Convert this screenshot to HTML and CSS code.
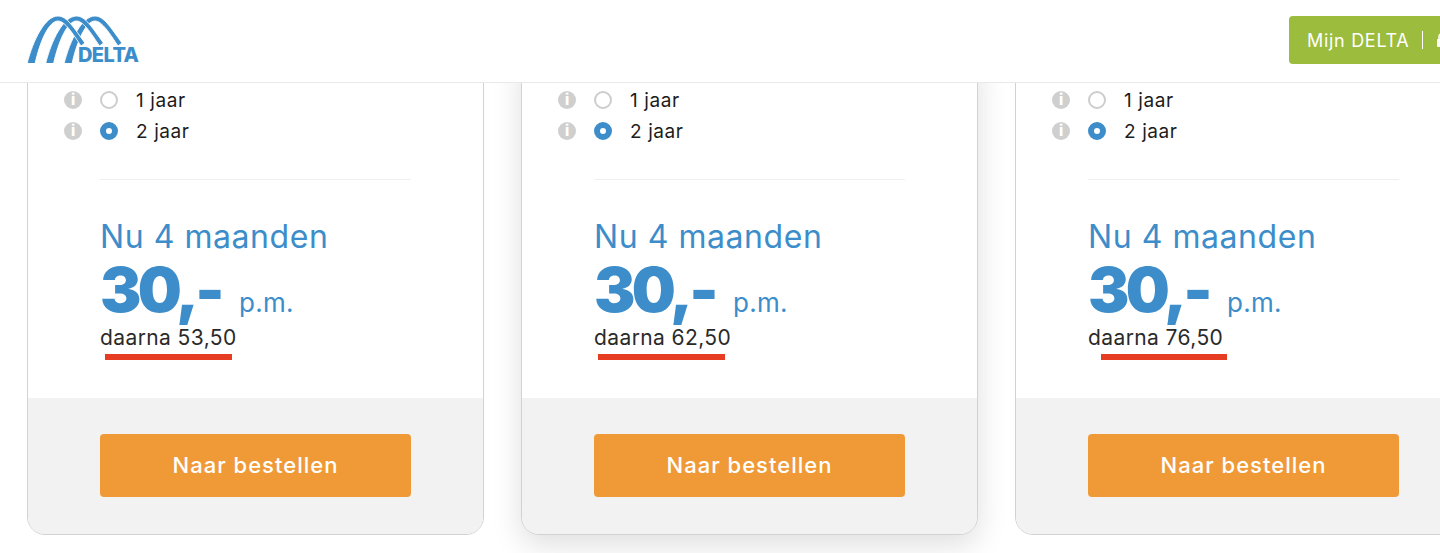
FILE: index.html
```html
<!DOCTYPE html>
<html lang="nl">
<head>
<meta charset="utf-8">
<title>DELTA</title>
<link rel="stylesheet" href="styles.css">
</head>
<body>
<header class="top">
  <a class="logo">
    <svg class="arcs" viewBox="0 0 112 49" width="112" height="49" aria-hidden="true">
      <g fill="#3c8dca" stroke="#fff" stroke-width=".9">
        <path d="M37 50C43 26 55 2 68 2C77 2 84 14 95 29L91 32C83 20 75 7 68 7C59 7 50 27 45 50Z"/>
        <path d="M18.500 50C24.500 26 36.500 2 49.500 2C58.500 2 65.500 14 76.500 29L72.500 32C64.500 20 56.500 7 49.500 7C40.500 7 31.500 27 26.500 50Z"/>
        <path d="M0 50C6 26 18 2 31 2C40 2 47 14 58 29L54 32C46 20 38 7 31 7C22 7 13 27 8 50Z"/>
      </g>
    </svg>
    <span class="logo-word">DELTA</span>
  </a>
  <a class="account"><span class="account-label">Mijn DELTA</span><span class="sep"></span>
    <svg class="lock" viewBox="0 0 12 14" width="12" height="14" aria-hidden="true"><path d="M3 6V4a3 3 0 0 1 6 0v2" fill="none" stroke="#fff" stroke-width="1.6"/><rect x="1" y="6" width="10" height="8" rx="1" fill="#fff"/></svg>
  </a>
</header>
<main class="cards">
  <article class="card">
    <div class="body">
      <div class="opts">
        <div class="opt"><span class="info">i</span><span class="radio"></span><span class="opt-label">1 jaar</span></div>
        <div class="opt"><span class="info">i</span><span class="radio on"></span><span class="opt-label">2 jaar</span></div>
      </div>
      <hr class="rule">
      <p class="promo">Nu 4 maanden</p>
      <p class="price"><strong>30,-</strong><span class="pm">p.m.</span></p>
      <p class="after">daarna 53,50</p>
    </div>
    <div class="foot"><a class="cta">Naar bestellen</a></div>
    <span class="mark"></span>
  </article>
  <article class="card raised">
    <div class="body">
      <div class="opts">
        <div class="opt"><span class="info">i</span><span class="radio"></span><span class="opt-label">1 jaar</span></div>
        <div class="opt"><span class="info">i</span><span class="radio on"></span><span class="opt-label">2 jaar</span></div>
      </div>
      <hr class="rule">
      <p class="promo">Nu 4 maanden</p>
      <p class="price"><strong>30,-</strong><span class="pm">p.m.</span></p>
      <p class="after">daarna 62,50</p>
    </div>
    <div class="foot"><a class="cta">Naar bestellen</a></div>
    <span class="mark mark-mid"></span>
  </article>
  <article class="card">
    <div class="body">
      <div class="opts">
        <div class="opt"><span class="info">i</span><span class="radio"></span><span class="opt-label">1 jaar</span></div>
        <div class="opt"><span class="info">i</span><span class="radio on"></span><span class="opt-label">2 jaar</span></div>
      </div>
      <hr class="rule">
      <p class="promo">Nu 4 maanden</p>
      <p class="price"><strong>30,-</strong><span class="pm">p.m.</span></p>
      <p class="after">daarna 76,50</p>
    </div>
    <div class="foot"><a class="cta">Naar bestellen</a></div>
    <span class="mark mark-last"></span>
  </article>
</main>
</body>
</html>
```
FILE: styles.css
```css
* { box-sizing: border-box; }
html, body { margin: 0; height: 553px; overflow: hidden; background: #fff; }
body { font-family: "Inter", "Noto Sans", sans-serif; color: #222; position: relative; }
.top {
  position: relative; z-index: 2; height: 83px; background: #fff;
  border-bottom: 1px solid #e9e9e9;
  display: flex; justify-content: space-between; align-items: flex-start;
  padding: 14px 0 0 27px; overflow: hidden;
}
.logo { position: relative; display: block; width: 112px; height: 50px; }
.arcs { display: block; }
.logo-word {
  position: absolute; left: 50px; bottom: 0;
  font: 800 20px/18px "Inter", sans-serif; color: #3c8dca; letter-spacing: -.6px;
  background: #fff; padding-left: 1px;
}
.account {
  display: flex; align-items: center; flex: none;
  height: 48px; margin: 2px -30px 0 0; padding: 0 24px 0 18px; width: 181px;
  background: #9bbc3c; border-radius: 4px 0 0 4px; color: #fff;
}
.account-label { font: 400 18px/20px "Inter", sans-serif; white-space: nowrap; letter-spacing: .7px; padding-top: 2px; }
.sep { width: 1px; height: 18px; background: #fff; margin: 0 13px; flex: none; }
.lock { flex: none; }
.cards {
  display: flex; gap: 37px; margin: -30px 0 0 27px; width: 1445px;
}
.card {
  position: relative; flex: none; width: 457px; height: 482px;
  border: 1px solid #d2d2d2; border-radius: 0 0 18px 18px;
  background: #fff;
  display: flex; flex-direction: column;
}
.raised { box-shadow: 0 10px 30px rgba(0,0,0,.13); }
.body { flex: 1; padding: 36px 72px 0 36px; }
.opts { display: grid; gap: 11px; height: 51px; }
.opt { display: flex; align-items: center; height: 20px; }
.info {
  width: 18px; height: 18px; border-radius: 50%; background: #cfcfcf; color: #fff;
  font: 800 15px/18px "Inter", sans-serif; text-align: center; flex: none;
}
.radio {
  width: 18px; height: 18px; border-radius: 50%; border: 2.5px solid #cdcdcd; background: #fff;
  margin-left: 18px; flex: none;
}
.radio.on { border: 6px solid #3c8dca; }
.opt-label { margin-left: 18px; font-size: 19px; line-height: 20px; color: #1c1c1c; padding-top: 2px; letter-spacing: .6px; }
.rule { margin: 38px 0 0 36px; border: 0; border-top: 1px solid #efefef; }
.promo, .price, .after { margin: 0 0 0 36px; white-space: nowrap; }
.promo { margin-top: 37px; font: 400 32px/40px "Inter", sans-serif; color: #3c8dca; letter-spacing: .55px; }
.price { margin-top: 6px; height: 54px; display: flex; align-items: baseline; color: #3c8dca; }
.price strong { font: 900 62px/54px "Inter", sans-serif; letter-spacing: -3.8px; }
.pm { font: 400 26px/1 "Inter", sans-serif; margin-left: 18px; letter-spacing: .3px; }
.after { margin-top: 8px; font: 400 21px/26px "Inter", sans-serif; color: #2a2a2a; letter-spacing: .4px; }
.foot {
  flex: none; height: 136px; background: #f2f2f2; padding: 36px 72px 0;
  border-radius: 0 0 17px 17px;
}
.cta {
  display: flex; align-items: center; justify-content: center; height: 63px;
  padding-bottom: 2px;
  background: #f09a37; border-radius: 4px; color: #fff;
  font: 500 22px/1 "Inter", sans-serif; letter-spacing: 1px;
}
.mark { position: absolute; left: 77px; top: 300px; width: 127px; height: 5.5px; background: #e63c22; }
.mark-mid { left: 76px; }
.mark-last { left: 85px; width: 126px; }
```
